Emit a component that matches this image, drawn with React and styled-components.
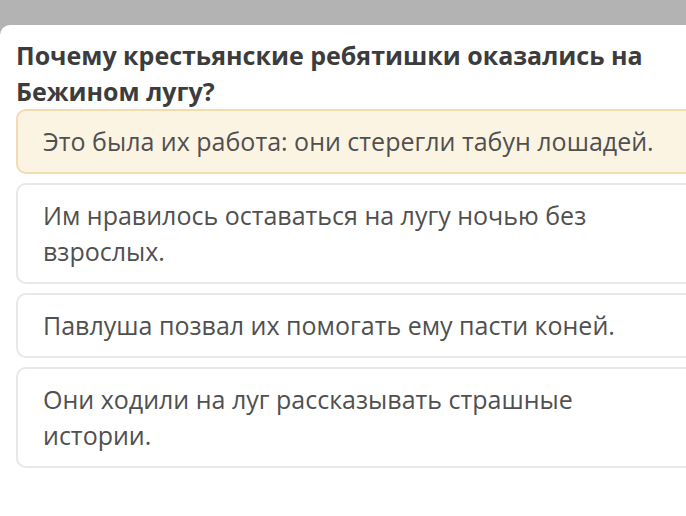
import React from "react";
import styled, { createGlobalStyle } from "styled-components";

const Global = createGlobalStyle`
    html, body {
        margin: 0;
        padding: 0;
        background: #b3b3b3;
        overflow: hidden;
    }
    body {
        font-family: "Open Sans", "Noto Sans", sans-serif;
    }
`

const Page = styled.div`
    width: 686px;
    height: 516px;
    padding-top: 25px;
    box-sizing: border-box;
    overflow: hidden;
`

const Card = styled.div`
    background: #ffffff;
    border-top-left-radius: 10px;
    height: 100%;
    padding: 12px 0 0 16px;
    box-sizing: border-box;
`

const Question = styled.h2`
    margin: 0;
    font-size: 25px;
    line-height: 36px;
    font-weight: 700;
    color: #3c3c3c;
    width: 668px;
`

const Options = styled.div`
    display: flex;
    flex-direction: column;
    gap: 9px;
    width: 700px;
`

const Option = styled.div`
    border: 2px solid ${(p) => (p.$selected ? "#f2dcae" : "#e8e8e8")};
    background: ${(p) => (p.$selected ? "#fcf4e3" : "#ffffff")};
    border-radius: 10px;
    padding: 12px 40px 13px 25px;
    font-size: 25px;
    line-height: 36px;
    color: #505050;
`

const answers = [
    "Это была их работа: они стерегли табун лошадей.",
    "Им нравилось оставаться на лугу ночью без взрослых.",
    "Павлуша позвал их помогать ему пасти коней.",
    "Они ходили на луг рассказывать страшные истории.",
]

const App = () => {
    return (
        <Page>
            <Global />
            <Card>
                <Question>Почему крестьянские ребятишки оказались на Бежином лугу?</Question>
                <Options>
                    {answers.map((a, i) => (
                        <Option key={i} $selected={i === 0}>{a}</Option>
                    ))}
                </Options>
            </Card>
        </Page>
    )
}

export default App
